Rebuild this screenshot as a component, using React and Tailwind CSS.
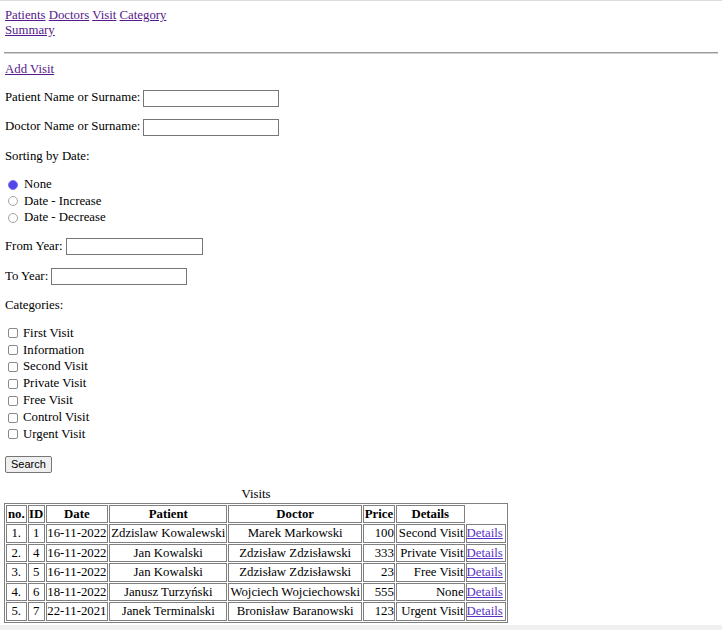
const navLinks = ["Patients", "Doctors", "Visit", "Category", "Summary"];
const sortings = ["None", "Date - Increase", "Date - Decrease"];
const categories = ["First Visit", "Information", "Second Visit", "Private Visit", "Free Visit", "Control Visit", "Urgent Visit"];

const visits = [
  { no: "1.", id: 1, date: "16-11-2022", patient: "Zdzislaw Kowalewski", doctor: "Marek Markowski", price: 100, cat: "Second Visit" },
  { no: "2.", id: 4, date: "16-11-2022", patient: "Jan Kowalski", doctor: "Zdzisław Zdzisławski", price: 333, cat: "Private Visit" },
  { no: "3.", id: 5, date: "16-11-2022", patient: "Jan Kowalski", doctor: "Zdzisław Zdzisławski", price: 23, cat: "Free Visit" },
  { no: "4.", id: 6, date: "18-11-2022", patient: "Janusz Turzyński", doctor: "Wojciech Wojciechowski", price: 555, cat: "None" },
  { no: "5.", id: 7, date: "22-11-2021", patient: "Janek Terminalski", doctor: "Bronisław Baranowski", price: 123, cat: "Urgent Visit" },
];

const cell = "border border-[#808080] p-0 h-[18.5px] leading-[15px] whitespace-nowrap";

function TextInput({ w = "w-[136px]" }) {
  return <span className={"inline-block h-[17px] border border-[#767676] bg-white ml-[3px] " + w} />;
}

function Radio({ checked }) {
  return checked ? (
    <span className="w-[10px] h-[10px] rounded-full border border-[#7d74f0] bg-[#5246e6] shrink-0" />
  ) : (
    <span className="w-[10px] h-[10px] rounded-full border border-[#a3a3a3] bg-white shrink-0" />
  );
}

export default function App() {
  return (
    <div className="w-[722px] h-[630px] overflow-hidden bg-white text-black border-t border-[#dcdcdc] font-['Liberation_Serif',serif] text-[12.8px] flex flex-col">
      <div className="px-[5px] pt-[7px] flex flex-col">
        <nav className="w-[175px] leading-[15px]">
          {navLinks.map((l) => (
            <span key={l}><a href="#" className="text-[#551a8b] underline">{l}</a> </span>
          ))}
        </nav>

        <div className="mt-[14px] -mx-[1px] border-t border-[#9a9a9a] border-b border-b-[#d0d0d0]" />

        <a href="#" className="mt-[7.5px] leading-[15px] text-[#551a8b] underline self-start">Add Visit</a>

        <div className="mt-[12.5px] h-[18px] flex items-center">Patient Name or Surname: <TextInput /></div>
        <div className="mt-[11px] h-[18px] flex items-center">Doctor Name or Surname: <TextInput /></div>

        <p className="mt-[12.5px] leading-[15px]">Sorting by Date:</p>
        <div className="mt-[13px] flex flex-col">
          {sortings.map((s, i) => (
            <label key={s} className="h-[16.5px] flex items-center pl-[3px] gap-[6px]">
              <Radio checked={i === 0} />
              <span>{s}</span>
            </label>
          ))}
        </div>

        <div className="mt-[11.5px] h-[18px] flex items-center">From Year: <TextInput w="w-[137px]" /></div>
        <div className="mt-[12px] h-[18px] flex items-center">To Year: <TextInput /></div>

        <p className="mt-[12.5px] leading-[15px]">Categories:</p>
        <div className="mt-[12px] flex flex-col">
          {categories.map((c) => (
            <label key={c} className="h-[16.83px] flex items-center pl-[3px] gap-[5px]">
              <span className="w-[10px] h-[10px] rounded-[2px] border border-[#8a8a8a] bg-white shrink-0" />
              <span>{c}</span>
            </label>
          ))}
        </div>

        <button className="mt-[13.5px] self-start h-[17px] px-[5px] border border-[#767676] rounded-[2px] bg-[#efefef] font-['Liberation_Sans',sans-serif] text-[11px] leading-none">Search</button>

        <table className="mt-[14px] w-[504px] -ml-[1px] table-fixed border-separate border-spacing-[1.6px] border border-[#808080]">
          <caption className="leading-[15px] pb-[0.5px]">Visits</caption>
          <colgroup>
            <col className="w-[20.4px]" />
            <col className="w-[17.1px]" />
            <col className="w-[61.7px]" />
            <col className="w-[117.4px]" />
            <col className="w-[132.4px]" />
            <col className="w-[31.7px]" />
            <col className="w-[68.1px]" />
            <col className="w-[40px]" />
          </colgroup>
          <thead>
            <tr>
              {["no.", "ID", "Date", "Patient", "Doctor", "Price", "Details"].map((h) => (
                <th key={h} className={cell + " font-bold text-center"}>{h}</th>
              ))}
            </tr>
          </thead>
          <tbody>
            {visits.map((v) => (
              <tr key={v.no}>
                <td className={cell + " text-center"}>{v.no}</td>
                <td className={cell + " text-center"}>{v.id}</td>
                <td className={cell + " text-center"}>{v.date}</td>
                <td className={cell + " text-center"}>{v.patient}</td>
                <td className={cell + " text-center"}>{v.doctor}</td>
                <td className={cell + " text-right"}>{v.price}</td>
                <td className={cell + " text-right"}>{v.cat}</td>
                <td className={cell}><a href="#" className="text-[#5a32c8] underline">Details</a></td>
              </tr>
            ))}
          </tbody>
        </table>
      </div>
      <div className="mt-auto h-[5px] bg-[#f0f0f0]" />
    </div>
  );
}
